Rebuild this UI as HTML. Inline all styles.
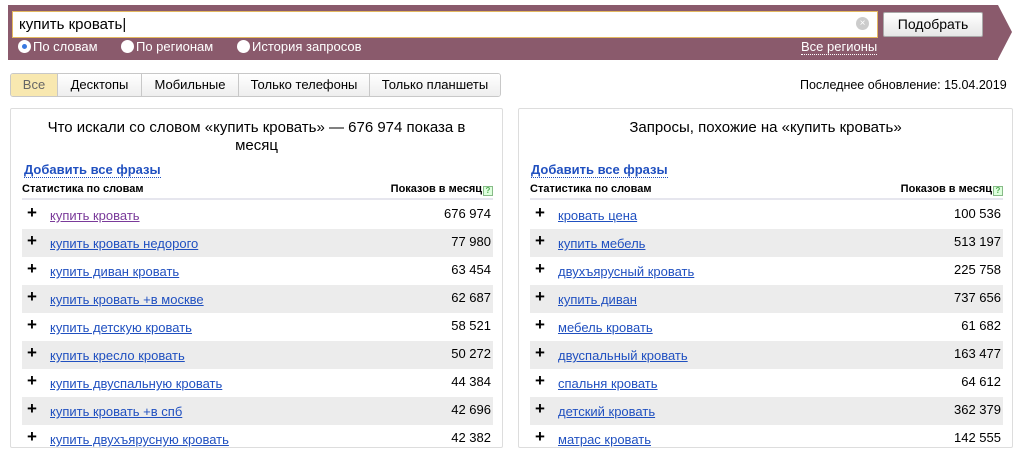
<!DOCTYPE html>
<html><head><meta charset="utf-8"><style>
*{box-sizing:border-box;margin:0;padding:0}
body{width:1024px;height:438px;overflow:hidden;background:#fff;font-family:"Liberation Sans",Arial,sans-serif;color:#000;position:relative}
.bar{position:absolute;left:8px;top:5px;width:990px;height:55px;background:#8a5a6c}
.arrow{position:absolute;left:998px;top:5px;width:0;height:0;border-top:27.5px solid transparent;border-bottom:27.5px solid transparent;border-left:14px solid #8a5a6c}
.inp{position:absolute;left:12px;top:11px;width:866px;height:27px;background:#fff;border:1px solid #e3b860;font-size:15px;padding:4px 6px}
.clr{position:absolute;left:856px;top:17px;width:13px;height:13px;border-radius:50%;background:#ccc;color:#fff;font-size:10px;line-height:13px;text-align:center}
.btn{position:absolute;left:883px;top:12px;width:100px;height:25px;background:linear-gradient(#fff,#e6e6e6);border:1px solid #aaa;border-radius:2px;font-size:14px;text-align:center;line-height:23px}
.rad{position:absolute;top:39px;font-size:13px;color:#fff;display:flex;align-items:center}
.rad i{display:inline-block;width:13px;height:13px;border-radius:50%;background:#fff;margin-right:2px}
.rad i.on{background:#3a7ae0;border:4px solid #fff}
.reg{position:absolute;left:801px;top:39px;font-size:13px;color:#fff;border-bottom:1px dotted #fff}
.tabs{position:absolute;left:10px;top:73px;height:24px;display:flex;border:1px solid #c8c8c8;border-radius:3px;font-size:13px;overflow:hidden}
.tabs div{text-align:center;line-height:22px;border-right:1px solid #c8c8c8;background:linear-gradient(#fff,#eee)}
.tabs div.a{background:#f8e8b0;color:#666}
.tabs div:last-child{border:none}
.upd{position:absolute;left:800px;top:78px;font-size:12.5px}
.panel{position:absolute;top:108px;height:340px;border:1px solid #ddd;border-radius:2px}
.t{position:absolute;left:0;right:0;top:10px;text-align:center;font-size:15px;line-height:18px;padding:0 20px}
.add{position:absolute;top:53px;font-size:13px;font-weight:bold;color:#2050c0;border-bottom:1px dotted #2050c0;line-height:15px}
.hd{position:absolute;top:74px;font-size:11px;font-weight:bold;height:17px;border-bottom:2px solid #e6e6ee}
.hd span{position:absolute;right:0}
.hd span b{display:inline-block;width:10px;height:10px;border:1px solid #8b8;background:#dfd;color:#5a5;font-size:8px;line-height:8px;text-align:center;vertical-align:-1px;margin-left:1px}
.hd .l{position:absolute;left:0}
.rows{position:absolute;top:92px}
.r{height:28px;position:relative;font-size:13px}
.r:nth-child(even){background:#ececec}
.r .p{position:absolute;left:5px;top:2px;font-size:17px;font-weight:bold}
.r a{position:absolute;left:28px;top:7px;color:#2050c0;text-decoration:underline}
.r .n{position:absolute;right:2px;top:5px}
</style></head><body>
<div class="bar"></div><div class="arrow"></div>
<div class="inp">купить кровать|</div><div class="clr">×</div>
<div class="btn">Подобрать</div>
<div class="rad" style="left:18px"><i class="on"></i>По словам</div>
<div class="rad" style="left:121px"><i></i>По регионам</div>
<div class="rad" style="left:237px"><i></i>История запросов</div>
<div class="reg">Все регионы</div>
<div class="tabs"><div class="a" style="width:47px">Все</div><div style="width:84px">Десктопы</div><div style="width:97px">Мобильные</div><div style="width:131px">Только телефоны</div><div style="width:130px">Только планшеты</div></div>
<div class="upd">Последнее обновление: 15.04.2019</div>

<div class="panel" style="left:10px;width:493px">
<div class="t">Что искали со словом «купить кровать» — 676 974 показа в месяц</div>
<div class="add" style="left:13px">Добавить все фразы</div>
<div class="hd" style="left:11px;width:471px"><span class="l">Статистика по словам</span><span>Показов в месяц<b>?</b></span></div>
<div class="rows" style="left:11px;width:471px">
<div class="r"><span class="p">+</span><a style="color:#7a3a9a">купить кровать</a><span class="n">676 974</span></div>
<div class="r"><span class="p">+</span><a>купить кровать недорого</a><span class="n">77 980</span></div>
<div class="r"><span class="p">+</span><a>купить диван кровать</a><span class="n">63 454</span></div>
<div class="r"><span class="p">+</span><a>купить кровать +в москве</a><span class="n">62 687</span></div>
<div class="r"><span class="p">+</span><a>купить детскую кровать</a><span class="n">58 521</span></div>
<div class="r"><span class="p">+</span><a>купить кресло кровать</a><span class="n">50 272</span></div>
<div class="r"><span class="p">+</span><a>купить двуспальную кровать</a><span class="n">44 384</span></div>
<div class="r"><span class="p">+</span><a>купить кровать +в спб</a><span class="n">42 696</span></div>
<div class="r"><span class="p">+</span><a>купить двухъярусную кровать</a><span class="n">42 382</span></div>
</div></div>

<div class="panel" style="left:518px;width:495px">
<div class="t">Запросы, похожие на «купить кровать»</div>
<div class="add" style="left:12px">Добавить все фразы</div>
<div class="hd" style="left:11px;width:473px"><span class="l">Статистика по словам</span><span>Показов в месяц<b>?</b></span></div>
<div class="rows" style="left:11px;width:473px">
<div class="r"><span class="p">+</span><a>кровать цена</a><span class="n">100 536</span></div>
<div class="r"><span class="p">+</span><a>купить мебель</a><span class="n">513 197</span></div>
<div class="r"><span class="p">+</span><a>двухъярусный кровать</a><span class="n">225 758</span></div>
<div class="r"><span class="p">+</span><a>купить диван</a><span class="n">737 656</span></div>
<div class="r"><span class="p">+</span><a>мебель кровать</a><span class="n">61 682</span></div>
<div class="r"><span class="p">+</span><a>двуспальный кровать</a><span class="n">163 477</span></div>
<div class="r"><span class="p">+</span><a>спальня кровать</a><span class="n">64 612</span></div>
<div class="r"><span class="p">+</span><a>детский кровать</a><span class="n">362 379</span></div>
<div class="r"><span class="p">+</span><a>матрас кровать</a><span class="n">142 555</span></div>
</div></div>
</body></html>
